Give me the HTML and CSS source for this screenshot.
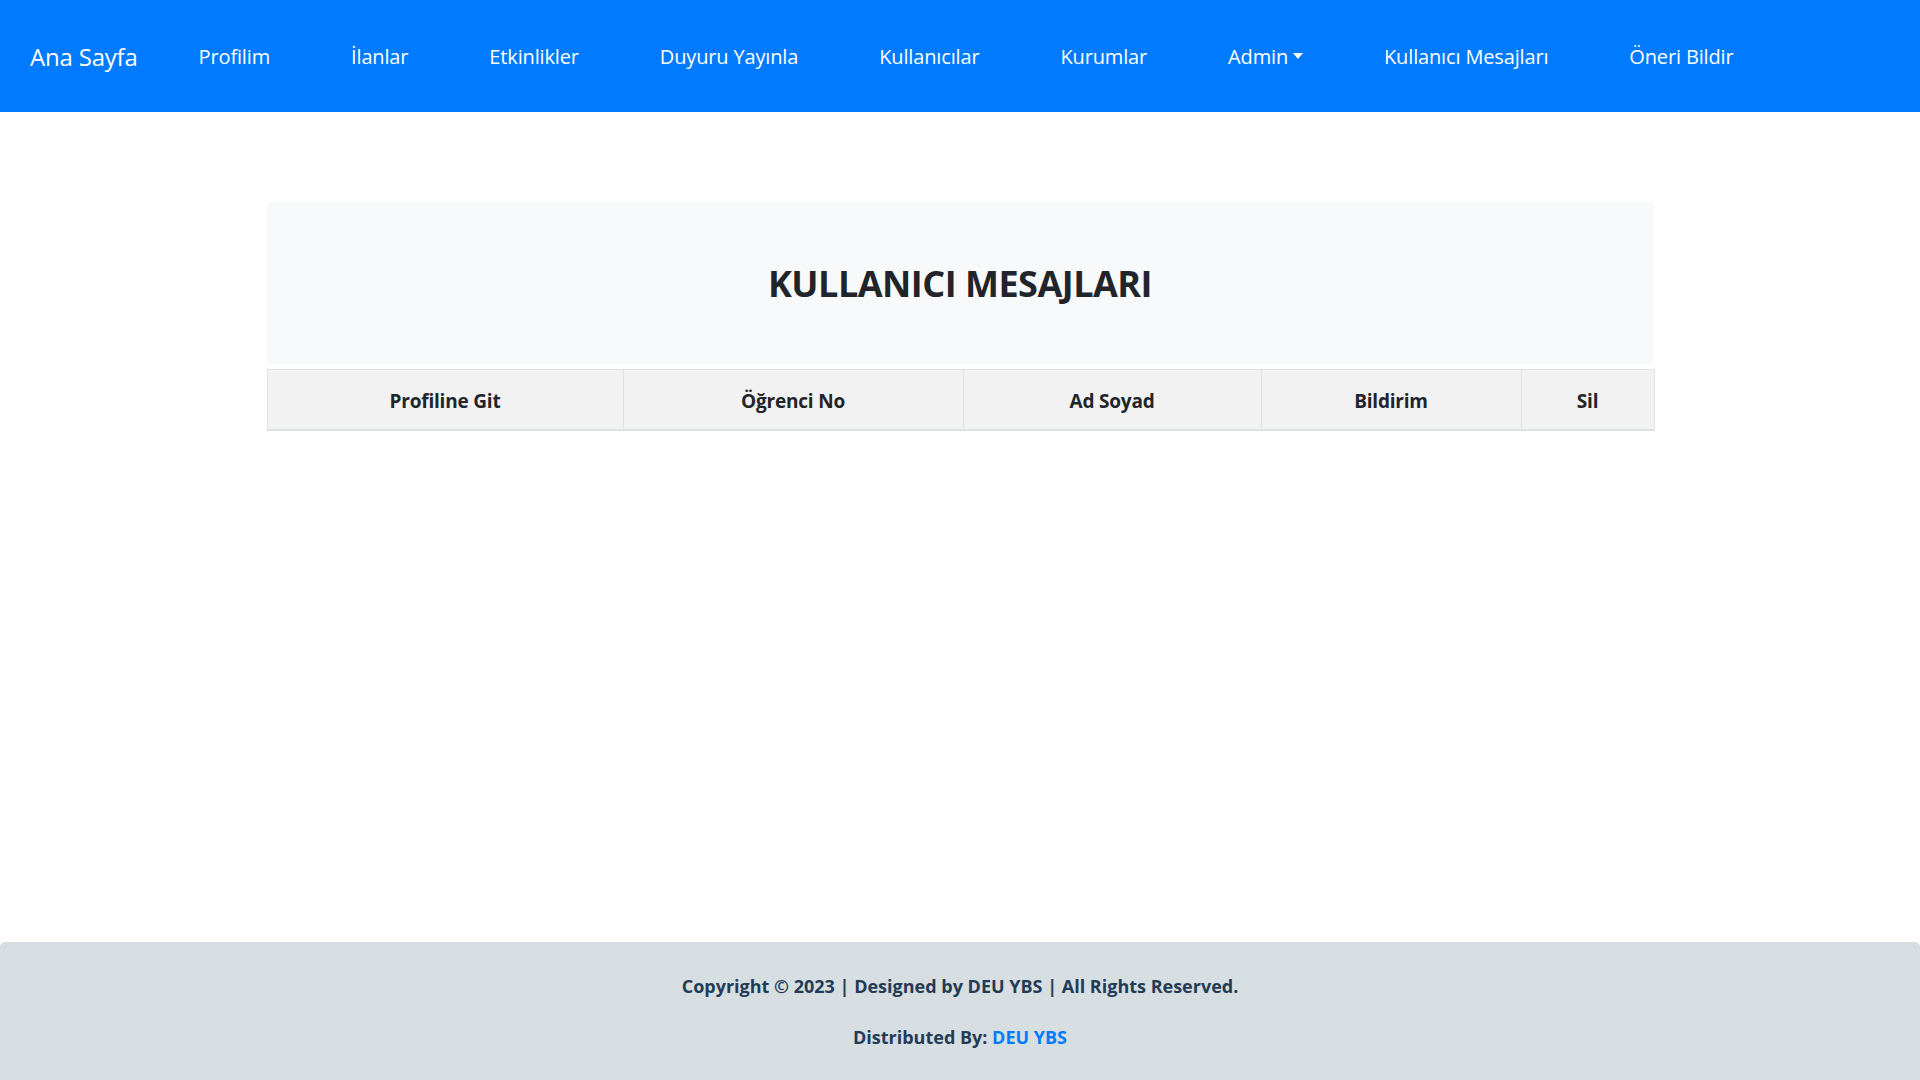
FILE: index.html
```html
<!DOCTYPE html>
<html lang="tr">
<head>
<meta charset="utf-8">
<title>Kullanıcı Mesajları</title>
<link rel="stylesheet" href="styles.css">
</head>
<body>
<nav class="navbar">
  <a class="brand" href="#">Ana Sayfa</a>
  <ul class="nav-list">
    <li><a href="#">Profilim</a></li>
    <li><a href="#">İlanlar</a></li>
    <li><a href="#">Etkinlikler</a></li>
    <li><a href="#">Duyuru Yayınla</a></li>
    <li><a href="#">Kullanıcılar</a></li>
    <li><a href="#">Kurumlar</a></li>
    <li><a href="#" class="dropdown">Admin<span class="caret"></span></a></li>
    <li><a href="#">Kullanıcı Mesajları</a></li>
    <li><a href="#">Öneri Bildir</a></li>
  </ul>
</nav>
<main class="content">
  <div class="header-box">
    <h2 class="title">KULLANICI MESAJLARI</h2>
  </div>
  <table class="msg-table">
    <colgroup>
      <col class="c1"><col class="c2"><col class="c3"><col class="c4"><col class="c5">
    </colgroup>
    <thead>
      <tr>
        <th>Profiline Git</th>
        <th>Öğrenci No</th>
        <th>Ad Soyad</th>
        <th>Bildirim</th>
        <th>Sil</th>
      </tr>
    </thead>
    <tbody></tbody>
  </table>
</main>
<footer class="footer">
  <p>Copyright © 2023 | Designed by DEU YBS | All Rights Reserved.</p>
  <p>Distributed By: <a href="#">DEU YBS</a></p>
</footer>
</body>
</html>
```
FILE: styles.css
```css
* { box-sizing: border-box; }
html, body { margin: 0; padding: 0; }
body {
  font-family: "Open Sans", "Noto Sans", sans-serif;
  color: #212529;
  background: #fff;
  min-height: 100vh;
  display: flex;
  flex-direction: column;
}
a { text-decoration: none; }

.navbar {
  height: 112px;
  background: #007bff;
  display: flex;
  align-items: center;
  padding-left: 30px;
}
.brand {
  color: #fff;
  font-size: 24px;
  margin-right: 61px;
  letter-spacing: -0.2px;
}
.nav-list {
  list-style: none;
  margin: 0;
  padding: 0;
  display: flex;
  gap: 81px;
}
.nav-list a {
  color: #fff;
  font-size: 20px;
  letter-spacing: -0.15px;
  display: inline-flex;
  align-items: center;
}
.caret {
  display: inline-block;
  margin-left: 5px;
  border-top: 6px solid #fff;
  border-left: 5px solid transparent;
  border-right: 5px solid transparent;
}

.content {
  width: 1387px;
  margin: 90px auto 0;
}
.header-box {
  background: #f8f9fa;
  height: 162px;
  display: flex;
  align-items: center;
  justify-content: center;
}
.title {
  margin: 0;
  font-size: 36px;
  font-weight: 700;
  color: #212529;
  letter-spacing: -0.5px;
}
.msg-table {
  width: 100%;
  margin-top: 5px;
  border-collapse: collapse;
  table-layout: fixed;
}
.c1 { width: 356px; }
.c2 { width: 340px; }
.c3 { width: 298px; }
.c4 { width: 260px; }
.c5 { width: 133px; }
.msg-table th {
  background: #f2f2f2;
  border: 1px solid #dee2e6;
  border-bottom-width: 2px;
  height: 60px;
  padding: 3px 8px 0;
  font-size: 19px;
  font-weight: 700;
  color: #212529;
  letter-spacing: -0.2px;
  text-align: center;
  vertical-align: middle;
}

.footer {
  margin-top: auto;
  height: 138px;
  background: #d6dee1;
  border-radius: 5px 5px 0 0;
  display: flex;
  flex-direction: column;
  align-items: center;
  justify-content: center;
  gap: 31px;
  color: #243b55;
  font-weight: 700;
  font-size: 18px;
}
.footer p { margin: 0; line-height: 20px; }
.footer a { color: #007bff; }
```
